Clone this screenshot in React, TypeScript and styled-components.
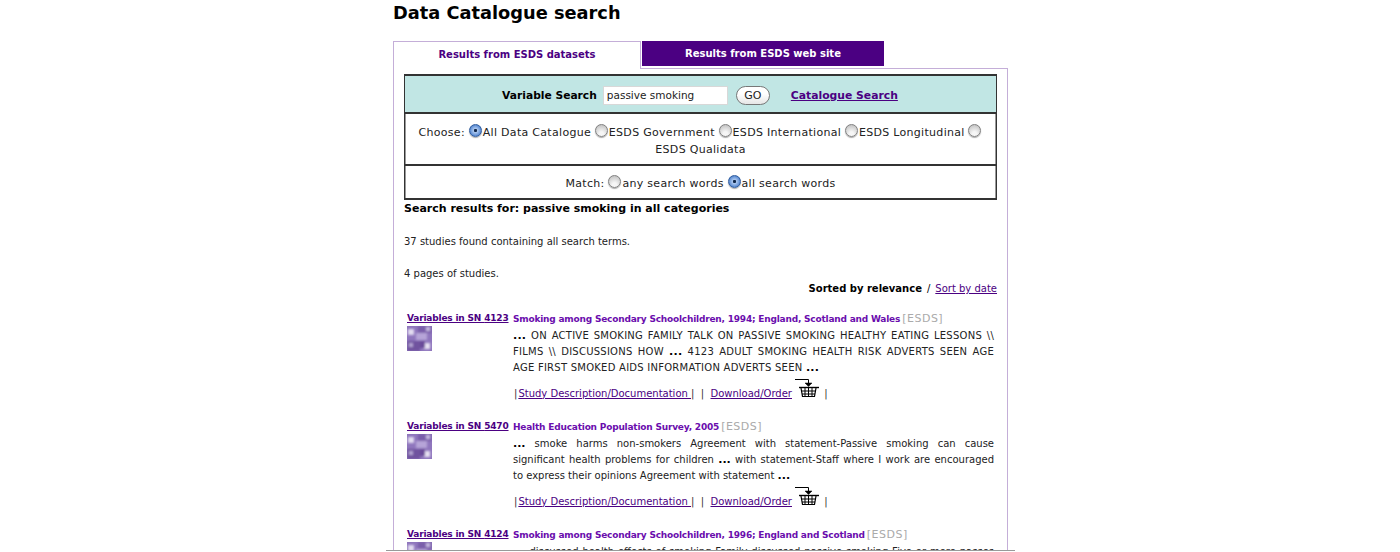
import React from "react";
import styled, { createGlobalStyle } from "styled-components";

const Global = createGlobalStyle`
  html, body { margin: 0; padding: 0; background: #fff; height: 552px; overflow: hidden; }
  body { font-family: "DejaVu Sans", Verdana, sans-serif; color: #000; font-size: 10px; }
  a { color: #4b0082; }
`;

const Page = styled.div`
  position: relative;
  width: 629px;
  height: 552px;
  margin: 0 0 0 386px;
  padding-left: 7px;
  box-sizing: border-box;
  overflow: hidden;
`;

const CutLine = styled.div`
  position: absolute;
  left: 0;
  right: 0;
  top: 550px;
  height: 1px;
  background: #9a9a9a;
  border-bottom: 1px solid #fff;
`;

const Title = styled.h1`
  margin: 0;
  padding-top: 2px;
  height: 41px;
  box-sizing: border-box;
  font-size: 17.8px;
  line-height: 22px;
  font-weight: 700;
`;

const Tabs = styled.div`
  display: flex;
  height: 28px;
  position: relative;
  z-index: 1;
  gap: 1px;
`;

const ActiveTab = styled.div`
  width: 248px;
  height: 28px;
  box-sizing: border-box;
  border: 1px solid #c4aed8;
  border-bottom: 0;
  background: #fff;
  color: #4b0082;
  font-weight: 700;
  font-size: 10px;
  line-height: 26px;
  text-align: center;
`;

const InactiveTab = styled.div`
  width: 242px;
  height: 25px;
  background: #4b0082;
  color: #fff;
  font-weight: 700;
  font-size: 10px;
  line-height: 25px;
  text-align: center;
`;

const Panel = styled.div`
  width: 615px;
  height: 600px;
  margin-top: -1px;
  box-sizing: border-box;
  border: 1px solid #c4aed8;
  padding: 5px 10px 0;
`;

const SearchBox = styled.div`
  width: 593px;
  height: 126px;
  box-sizing: border-box;
  border-style: solid;
  border-color: #333;
  border-width: 2px 1px;
  box-shadow: inset 1px 0 0 #999, inset -1px 0 0 #999;
  display: flex;
  flex-direction: column;
`;

const SearchRow = styled.div`
  height: 38px;
  flex: none;
  box-sizing: border-box;
  background: #c1e6e4;
  border-bottom: 2px solid #333;
  padding: 2px 1px 0 0;
  display: flex;
  align-items: center;
  justify-content: center;
  gap: 7px;
  font-size: 11px;
`;

const SearchLabel = styled.b`
  font-weight: 700;
  font-size: 10.7px;
`;

const SearchInput = styled.input`
  width: 125px;
  height: 19px;
  box-sizing: border-box;
  border: 1px solid #d8d8d8;
  padding: 0 3px;
  margin: 0 0 0 -1px;
  font: 10.5px "DejaVu Sans", sans-serif;
  background: #fff;
  color: #222;
`;

const GoButton = styled.button`
  width: 34px;
  height: 19px;
  margin: 0 14px 0 1px;
  padding: 0;
  border: 1px solid #777;
  border-radius: 10px;
  background: linear-gradient(#fff 40%, #e6e6e6 100%);
  font: 11px "DejaVu Sans", sans-serif;
  color: #222;
`;

const CatalogueLink = styled.a`
  font-weight: 700;
  font-size: 10.8px;
`;

const OptionRow = styled.div<{ $h: number; $top: number; $last?: boolean }>`
  height: ${(p) => p.$h}px;
  flex: none;
  box-sizing: border-box;
  border-bottom: ${(p) => (p.$last ? "0" : "2px solid #333")};
  padding: ${(p) => p.$top}px 8px 0;
  text-align: center;
  font-size: 11px;
  letter-spacing: 0.3px;
  line-height: 17px;
  color: #222;
`;

const Radio = styled.input.attrs({ type: "radio" })`
  appearance: none;
  -webkit-appearance: none;
  width: 13px;
  height: 13px;
  margin: 0 1px 0 0;
  box-sizing: border-box;
  border-radius: 50%;
  vertical-align: -1px;
  border: 1px solid #808080;
  box-shadow: 0 1px 1px #aaa;
  background: radial-gradient(circle at 50% 80%, #f6f6f6 20%, #b8b8b8 100%);
  &:checked {
    border-color: #2f5c9e;
    background: radial-gradient(circle at 50% 50%, #10284c 0 16%, #a9c6ef 26%, #3f76c8 85%);
  }
`;

const Heading = styled.div`
  margin-top: 1px;
  font-weight: 700;
  font-size: 11px;
  line-height: 16px;
`;

const Info = styled.div`
  margin-top: 17px;
  font-size: 10px;
  line-height: 15px;
  color: #222;
`;

const SortRow = styled.div`
  width: 593px;
  display: flex;
  justify-content: flex-end;
  gap: 5px;
  font-size: 10px;
  line-height: 15px;
  b { font-weight: 700; font-size: 10px; }
`;

const Results = styled.div`
  margin-top: 16px;
  display: flex;
  flex-direction: column;
`;

const Result = styled.div`
  display: grid;
  grid-template-columns: 106px 481px;
  height: 108px;
  padding-left: 3px;
`;

const SideCol = styled.div`
  display: flex;
  flex-direction: column;
  align-items: flex-start;
  gap: 2px;
`;

const VarLink = styled.a`
  font-size: 9px;
  letter-spacing: -0.18px;
  font-weight: 700;
  line-height: 12px;
  white-space: nowrap;
`;

const Thumb = styled.svg`
  display: block;
  width: 25px;
  height: 25px;
`;

const MainCol = styled.div`
  min-width: 0;
`;

const TitleRow = styled.div`
  height: 16px;
  line-height: 16px;
  white-space: nowrap;
  margin-top: -1px;
`;

const StudyTitle = styled.a`
  color: #6a0dad;
  font-size: 9px;
  letter-spacing: -0.2px;
  font-weight: 700;
  text-decoration: none;
`;

const Source = styled.span`
  color: #aaa;
  font-size: 11px;
  letter-spacing: 0.5px;
  margin-left: 2px;
`;

const Snippet = styled.div`
  padding-top: 1px;
`;

const Line = styled.div<{ $last?: boolean; $caps?: boolean }>`
  font-size: 10px;
  line-height: 16px;
  color: #222;
  letter-spacing: ${(p) => (p.$caps ? "0.25px" : "0")};
  text-align: ${(p) => (p.$last ? "left" : "justify")};
  text-align-last: ${(p) => (p.$last ? "left" : "justify")};
  b { font-weight: 700; font-size: 11px; color: #000; }
`;

const Actions = styled.div`
  margin-top: 8px;
  height: 18px;
  display: flex;
  align-items: center;
  font-size: 10px;
  color: #333;
  white-space: pre;
`;

const Pipe = styled.span`
  padding: 0 1px 0 1px;
`;

const ActionLink = styled.a`
  font-size: 10px;
`;

const Basket = styled.svg`
  width: 24px;
  height: 19px;
  margin: -10px 2px 0 3px;
  flex: none;
`;

const ThumbArt = () => (
  <Thumb viewBox="0 0 25 25">
    <defs>
      <filter id="soft" x="-10%" y="-10%" width="120%" height="120%">
        <feGaussianBlur stdDeviation="0.9" />
      </filter>
    </defs>
    <rect width="25" height="25" fill="#8f76bd" />
    <g filter="url(#soft)">
      <rect x="0" y="15" width="13" height="10" fill="#6f529f" />
      <rect x="11" y="0" width="14" height="7" fill="#7a5eaa" />
      <rect x="9" y="7" width="11" height="7" fill="#b6a4d8" />
      <rect x="1" y="3" width="6" height="6" fill="#e2dbf0" />
      <rect x="17" y="17" width="6" height="6" fill="#e6e0f2" />
      <rect x="19" y="1" width="4" height="4" fill="#c5b8e0" />
      <rect x="13" y="15" width="5" height="7" fill="#6a4c99" />
      <rect x="2" y="17" width="4" height="4" fill="#b3a2d2" />
    </g>
  </Thumb>
);

const BasketIcon = () => (
  <Basket viewBox="0 0 24 19" fill="none" stroke="#000">
    <path d="M0 .5h13.5v4" strokeWidth="1" />
    <path d="M10 4h7l-3.5 3.5z" fill="#000" strokeWidth="0.5" />
    <path d="M4 8.5h20" strokeWidth="1.4" />
    <path d="M6 9l1.5 8.5h12L21 9" strokeWidth="1.2" />
    <path d="M6 12h15M7 15h13M10 9v8M13.5 9v8M17 9v8" strokeWidth="1" />
  </Basket>
);

type Study = {
  sn: string;
  title: string;
  lines: React.ReactNode[];
  caps?: boolean;
  actions?: boolean;
};

const studies: Study[] = [
  {
    sn: "4123",
    title: "Smoking among Secondary Schoolchildren, 1994; England, Scotland and Wales",
    lines: [
      <><b>...</b> ON ACTIVE SMOKING FAMILY TALK ON PASSIVE SMOKING HEALTHY EATING LESSONS \\</>,
      <>FILMS \\ DISCUSSIONS HOW <b>...</b> 4123 ADULT SMOKING HEALTH RISK ADVERTS SEEN AGE</>,
      <>AGE FIRST SMOKED AIDS INFORMATION ADVERTS SEEN <b>...</b></>,
    ],
    caps: true,
    actions: true,
  },
  {
    sn: "5470",
    title: "Health Education Population Survey, 2005",
    lines: [
      <><b>...</b> smoke harms non-smokers Agreement with statement-Passive smoking can cause</>,
      <>significant health problems for children <b>...</b> with statement-Staff where I work are encouraged</>,
      <>to express their opinions Agreement with statement <b>...</b></>,
    ],
    actions: true,
  },
  {
    sn: "4124",
    title: "Smoking among Secondary Schoolchildren, 1996; England and Scotland",
    lines: [
      <><b>...</b> discussed health effects of smoking Family discussed passive smoking Five or more passes</>,
    ],
  },
];

export default function App() {
  return (
    <>
      <Global />
      <Page>
        <Title>Data Catalogue search</Title>
        <Tabs>
          <ActiveTab>Results from ESDS datasets</ActiveTab>
          <InactiveTab>Results from ESDS web site</InactiveTab>
        </Tabs>
        <Panel>
          <SearchBox>
            <SearchRow>
              <SearchLabel>Variable Search</SearchLabel>
              <SearchInput defaultValue="passive smoking" />
              <GoButton>GO</GoButton>
              <CatalogueLink href="#">Catalogue Search</CatalogueLink>
            </SearchRow>
            <OptionRow $h={52} $top={10}>
              Choose:&nbsp;
              <Radio name="c" defaultChecked />All Data Catalogue{" "}
              <Radio name="c" />ESDS Government{" "}
              <Radio name="c" />ESDS International{" "}
              <Radio name="c" />ESDS Longitudinal{" "}
              <Radio name="c" />
              <br />
              ESDS Qualidata
            </OptionRow>
            <OptionRow $h={32} $top={9} $last>
              Match:&nbsp;
              <Radio name="m" />any search words{" "}
              <Radio name="m" defaultChecked />all search words
            </OptionRow>
          </SearchBox>
          <Heading>Search results for: passive smoking in all categories</Heading>
          <Info>37 studies found containing all search terms.</Info>
          <Info>4 pages of studies.</Info>
          <SortRow>
            <b>Sorted by relevance</b>
            <span>/</span>
            <a href="#">Sort by date</a>
          </SortRow>
          <Results>
            {studies.map((s) => (
              <Result key={s.sn}>
                <SideCol>
                  <VarLink href="#">Variables in SN {s.sn}</VarLink>
                  <ThumbArt />
                </SideCol>
                <MainCol>
                  <TitleRow>
                    <StudyTitle href="#">{s.title}</StudyTitle>
                    <Source>[ESDS]</Source>
                  </TitleRow>
                  <Snippet>
                    {s.lines.map((l, i) => (
                      <Line
                        key={i}
                        $caps={s.caps}
                        $last={i === s.lines.length - 1 && s.lines.length > 1}
                      >
                        {l}
                      </Line>
                    ))}
                  </Snippet>
                  {s.actions && (
                    <Actions>
                      <Pipe>|</Pipe>
                      <ActionLink href="#">Study Description/Documentation </ActionLink>
                      {"|  |  "}
                      <ActionLink href="#">Download/Order</ActionLink>
                      <BasketIcon />
                      {" |"}
                    </Actions>
                  )}
                </MainCol>
              </Result>
            ))}
          </Results>
        </Panel>
        <CutLine />
      </Page>
    </>
  );
}
